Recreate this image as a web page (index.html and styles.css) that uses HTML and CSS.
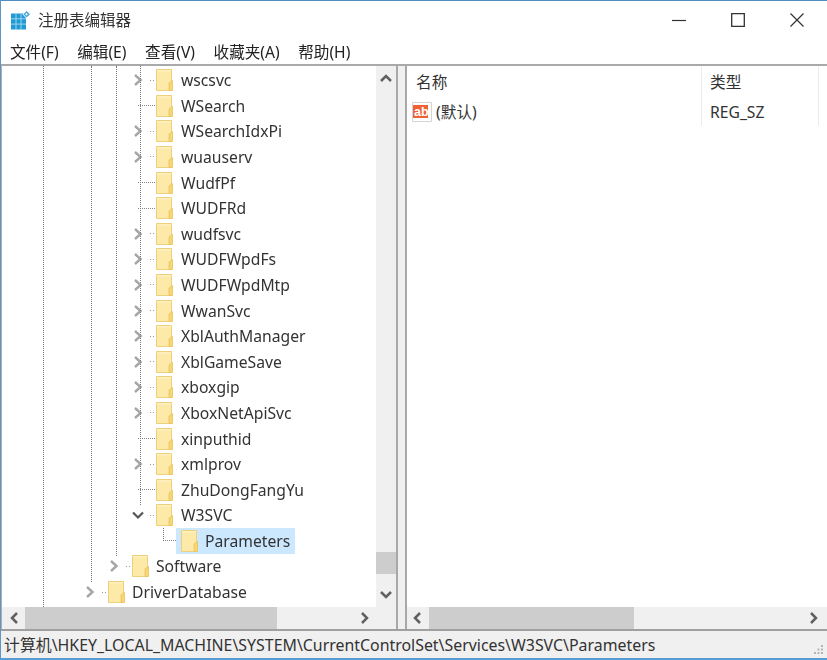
FILE: index.html
```html
<!DOCTYPE html>
<html lang="zh">
<head>
<meta charset="utf-8">
<title>注册表编辑器</title>
<link rel="stylesheet" href="styles.css">
</head>
<body>
<svg class="defs" width="0" height="0">
  <symbol id="folder" viewBox="0 0 17 22">
    <path d="M.5.5H15.5V21.5H.5Z" fill="#fde9a8" stroke="#efd07a"/>
    <path d="M1 1H15V2.500H1Z" fill="#fff0c0"/>
    <path d="M13 14L16.500 11.500V21.500H13Z" fill="#f8d673" stroke="#e8c25c" stroke-width=".8"/>
  </symbol>
  <symbol id="right" viewBox="0 0 12 12"><path d="M3 1L8.500 6L3 11" fill="none" stroke="#a6a6a6" stroke-width="2.400"/></symbol>
  <symbol id="down" viewBox="0 0 12 12"><path d="M1 3.500L6 8.500L11 3.500" fill="none" stroke="#555" stroke-width="2.200"/></symbol>
</svg>
<div class="window">
  <header class="titlebar">
    <svg class="appicon" width="20" height="20" viewBox="0 0 20 20">
      <path d="M0 3.500H15V19.500H0Z" fill="#1f9ad4"/>
      <path d="M5 3.500V19.500M10 3.500V19.500M0 8.800H15M0 14.100H15" stroke="#a9d9ef" stroke-width=".9"/>
      <path d="M15.500 0L20 4.200L15.500 8.400L11.500 4.200Z" fill="#fff"/>
      <path d="M15.500 1L19 4.200L15.500 7.400L12.500 4.200Z" fill="#4aa6d8"/>
      <path d="M15.500 3L16.800 4.200L15.500 5.400L14.300 4.200Z" fill="#fff"/>
    </svg>
    <span class="title">注册表编辑器</span>
    <div class="winbtns">
      <svg width="14" height="14" viewBox="0 0 14 14"><path d="M0 7.500H14" stroke="#333" stroke-width="1.200"/></svg>
      <svg width="14" height="14" viewBox="0 0 14 14"><path d="M.7.700H13.300V13.300H.7Z" fill="none" stroke="#333" stroke-width="1.300"/></svg>
      <svg width="14" height="14" viewBox="0 0 14 14"><path d="M.5.500L13.500 13.500M13.500.500L.5 13.500" stroke="#333" stroke-width="1.200"/></svg>
    </div>
  </header>
  <nav class="menubar">
    <span>文件(F)</span><span>编辑(E)</span><span>查看(V)</span><span>收藏夹(A)</span><span>帮助(H)</span>
  </nav>
  <main class="panes">
    <section class="pane tree-pane">
      <div class="tree-area">
        <div class="tree">
          <i class="guide g1"></i><i class="guide g2"></i><i class="guide g3"></i><i class="guide g4"></i>
          <div class="row d4"><svg class="tw"><use href="#right"/></svg><i class="stub"></i><svg class="fd"><use href="#folder"/></svg><span>wscsvc</span></div>
          <div class="row d4"><i class="tw"></i><i class="stub long"></i><svg class="fd"><use href="#folder"/></svg><span>WSearch</span></div>
          <div class="row d4"><svg class="tw"><use href="#right"/></svg><i class="stub"></i><svg class="fd"><use href="#folder"/></svg><span>WSearchIdxPi</span></div>
          <div class="row d4"><svg class="tw"><use href="#right"/></svg><i class="stub"></i><svg class="fd"><use href="#folder"/></svg><span>wuauserv</span></div>
          <div class="row d4"><i class="tw"></i><i class="stub long"></i><svg class="fd"><use href="#folder"/></svg><span>WudfPf</span></div>
          <div class="row d4"><i class="tw"></i><i class="stub long"></i><svg class="fd"><use href="#folder"/></svg><span>WUDFRd</span></div>
          <div class="row d4"><svg class="tw"><use href="#right"/></svg><i class="stub"></i><svg class="fd"><use href="#folder"/></svg><span>wudfsvc</span></div>
          <div class="row d4"><svg class="tw"><use href="#right"/></svg><i class="stub"></i><svg class="fd"><use href="#folder"/></svg><span>WUDFWpdFs</span></div>
          <div class="row d4"><svg class="tw"><use href="#right"/></svg><i class="stub"></i><svg class="fd"><use href="#folder"/></svg><span>WUDFWpdMtp</span></div>
          <div class="row d4"><svg class="tw"><use href="#right"/></svg><i class="stub"></i><svg class="fd"><use href="#folder"/></svg><span>WwanSvc</span></div>
          <div class="row d4"><svg class="tw"><use href="#right"/></svg><i class="stub"></i><svg class="fd"><use href="#folder"/></svg><span>XblAuthManager</span></div>
          <div class="row d4"><svg class="tw"><use href="#right"/></svg><i class="stub"></i><svg class="fd"><use href="#folder"/></svg><span>XblGameSave</span></div>
          <div class="row d4"><svg class="tw"><use href="#right"/></svg><i class="stub"></i><svg class="fd"><use href="#folder"/></svg><span>xboxgip</span></div>
          <div class="row d4"><svg class="tw"><use href="#right"/></svg><i class="stub"></i><svg class="fd"><use href="#folder"/></svg><span>XboxNetApiSvc</span></div>
          <div class="row d4"><i class="tw"></i><i class="stub long"></i><svg class="fd"><use href="#folder"/></svg><span>xinputhid</span></div>
          <div class="row d4"><svg class="tw"><use href="#right"/></svg><i class="stub"></i><svg class="fd"><use href="#folder"/></svg><span>xmlprov</span></div>
          <div class="row d4"><i class="tw"></i><i class="stub long"></i><svg class="fd"><use href="#folder"/></svg><span>ZhuDongFangYu</span></div>
          <div class="row d4"><svg class="tw"><use href="#down"/></svg><i class="stub"></i><svg class="fd"><use href="#folder"/></svg><span>W3SVC</span></div>
          <div class="row d5"><i class="tw"></i><i class="stub long elbow"></i><div class="selected"><svg class="fd"><use href="#folder"/></svg><span>Parameters</span></div></div>
          <div class="row d3"><svg class="tw"><use href="#right"/></svg><i class="stub"></i><svg class="fd"><use href="#folder"/></svg><span>Software</span></div>
          <div class="row d2"><svg class="tw"><use href="#right"/></svg><i class="stub"></i><svg class="fd"><use href="#folder"/></svg><span>DriverDatabase</span></div>
        </div>
        <div class="vscroll">
          <svg class="sb-arrow" width="12" height="8" viewBox="0 0 12 8"><path d="M1 7L6 2L11 7" fill="none" stroke="#606060" stroke-width="2.500"/></svg>
          <div class="vtrack"><div class="vthumb"></div></div>
          <svg class="sb-arrow" width="12" height="8" viewBox="0 0 12 8"><path d="M1 1L6 6L11 1" fill="none" stroke="#606060" stroke-width="2.500"/></svg>
        </div>
      </div>
      <div class="hscroll tree-h">
        <svg width="8" height="12" viewBox="0 0 8 12"><path d="M7 1L2 6L7 11" fill="none" stroke="#606060" stroke-width="2.500"/></svg>
        <div class="htrack"><div class="hthumb"></div></div>
        <svg width="8" height="12" viewBox="0 0 8 12"><path d="M1 1L6 6L1 11" fill="none" stroke="#606060" stroke-width="2.500"/></svg>
      </div>
    </section>
    <section class="pane list-pane">
      <div class="list-area">
        <div class="cols head">
          <div class="col col-name">名称</div>
          <div class="col col-type">类型</div>
        </div>
        <div class="cols entry">
          <div class="col col-name">
            <svg class="ab" width="20" height="20" viewBox="0 0 20 20">
              <path d="M.5.500H19.500V19.500H.5Z" fill="#fff" stroke="#d4d4d4"/>
              <path d="M1 3H16V16H1Z" fill="#ee6235"/>
              <text x="2" y="13.500" class="ab-text">ab</text>
            </svg>
            <span>(默认)</span>
          </div>
          <div class="col col-type">REG_SZ</div>
        </div>
      </div>
      <div class="hscroll list-h">
        <svg width="8" height="12" viewBox="0 0 8 12"><path d="M7 1L2 6L7 11" fill="none" stroke="#606060" stroke-width="2.500"/></svg>
        <div class="htrack"><div class="hthumb"></div></div>
        <svg width="8" height="12" viewBox="0 0 8 12"><path d="M1 1L6 6L1 11" fill="none" stroke="#606060" stroke-width="2.500"/></svg>
      </div>
    </section>
  </main>
  <footer class="status">
    <span>计算机\HKEY_LOCAL_MACHINE\SYSTEM\CurrentControlSet\Services\W3SVC\Parameters</span>
    <svg class="grip" width="12" height="12" viewBox="0 0 12 12" fill="#b5b5b5"><rect x="9" y="0" width="2" height="2"/><rect x="9" y="3.500" width="2" height="2"/><rect x="5.500" y="3.500" width="2" height="2"/><rect x="9" y="7" width="2" height="2"/><rect x="5.500" y="7" width="2" height="2"/><rect x="2" y="7" width="2" height="2"/></svg>
  </footer>
</div>
</body>
</html>
```
FILE: styles.css
```css
* { box-sizing: border-box; }
html, body { margin: 0; height: 100%; overflow: hidden; background: #fff; }
body { font-family: "Noto Sans", "Noto Sans CJK SC", sans-serif; font-size: 15.700px; color: #222; }
.defs { position: absolute; }
.window { width: 827px; height: 660px; display: flex; flex-direction: column; border-top: 1.500px solid #4f8fc4; border-left: 1.500px solid #5e97c6; border-bottom: 2px solid #5a9bd0; filter: blur(.5px); }
.titlebar { height: 37.500px; display: flex; align-items: center; padding-left: 10px; flex: none; }
.title { margin-left: 7px; font-size: 15.500px; color: #333; }
.winbtns { margin-left: auto; display: flex; gap: 45px; padding-right: 23px; }
.menubar { height: 27px; flex: none; display: flex; gap: 18.600px; padding-left: 9px; align-items: center; font-size: 15.600px; border-bottom: 2px solid #a9a9a9; }
.panes { flex: 1; min-height: 0; display: flex; gap: 7px; background: #f0f0f0; border-bottom: 2px solid #a0a0a0; }
.pane { display: flex; flex-direction: column; background: #fff; min-width: 0; }
.tree-pane { width: 397px; border-left: 1px solid #b0b0b0; border-right: 2px solid #a8a8a8; }
.list-pane { flex: 1; border-left: 2px solid #a8a8a8; }
.tree-area { flex: 1; min-height: 0; display: flex; }
.tree { position: relative; flex: 1; overflow: hidden; padding-top: 1.900px; }
.guide { position: absolute; top: 0; width: 1px; border-left: 1px dotted #777; }
.g1 { left: 41px; height: 100%; }
.g2 { left: 89px; height: 516px; }
.g3 { left: 114px; height: 490px; }
.g4 { left: 138px; height: 439px; }
.row { height: 25.600px; display: flex; align-items: center; white-space: nowrap; color: #333; }
.d2 { padding-left: 82px; }
.d3 { padding-left: 106px; }
.d4 { padding-left: 130px; }
.d5 { padding-left: 160px; }
.tw { width: 12px; height: 12px; flex: none; display: block; }
.stub { width: 12px; flex: none; height: 1px; background: linear-gradient(90deg, transparent 6px, #999 6px, #999 7px, transparent 7px, transparent 9px, #999 9px, #999 10px, transparent 10px); }
.stub.long { background: repeating-linear-gradient(90deg, #888 0 1px, transparent 1px 2px); margin-left: -6px; width: 18px; }
.stub.elbow { width: 13px; margin-left: -11px; position: relative; }
.stub.elbow::before { content: ""; position: absolute; left: 0; bottom: 0; height: 13px; border-left: 1px dotted #777; }
.fd { width: 17px; height: 22px; flex: none; }
.row span { margin-left: 8px; }
.row.d2 span, .row.d3 span, .row .selected span { margin-left: 7px; }
.selected { display: flex; align-items: center; height: 25.600px; background: #cce8ff; padding: 0 5px; }
.vscroll { width: 20px; flex: none; background: #f0f0f0; display: flex; flex-direction: column; align-items: center; }
.sb-arrow { flex: none; margin: 8px 0; }
.vtrack { flex: 1; position: relative; }
.vthumb { position: absolute; top: 462px; left: -10px; width: 20px; height: 22px; background: #cdcdcd; }
.hscroll { height: 22px; flex: none; background: #f0f0f0; display: flex; align-items: center; }
.htrack { flex: 1; height: 100%; padding: 0 6px 0 7px; }
.hthumb { height: 100%; background: #cdcdcd; }
.tree-h { padding: 0 27px 0 8px; }
.tree-h .hthumb { width: 252px; }
.list-h .hthumb { width: 205px; }
.list-h { padding: 0 9px 0 6px; }
.list-h .htrack { padding-left: 8px; }
.list-area { flex: 1; min-height: 0; }
.cols { display: flex; align-items: center; color: #333; }
.col { height: 100%; display: flex; align-items: center; }
.col-name { width: 295px; padding-left: 9px; border-right: 1px solid #e6eef5; }
.col-type { width: 117px; padding-left: 8px; border-right: 1px solid #e6eef5; }
.head { height: 31.500px; }
.entry { height: 29px; }
.entry .col-name { padding-left: 5px; }
.ab { flex: none; margin-right: 4px; }
.ab-text { font: bold 12.500px "Liberation Sans", sans-serif; fill: #fff; }
.status { height: 27px; flex: none; background: #f0f0f0; display: flex; align-items: center; padding-left: 3px; white-space: nowrap; color: #333; position: relative; font-size: 15.900px; }
.grip { position: absolute; right: 3px; bottom: 1px; }
```
